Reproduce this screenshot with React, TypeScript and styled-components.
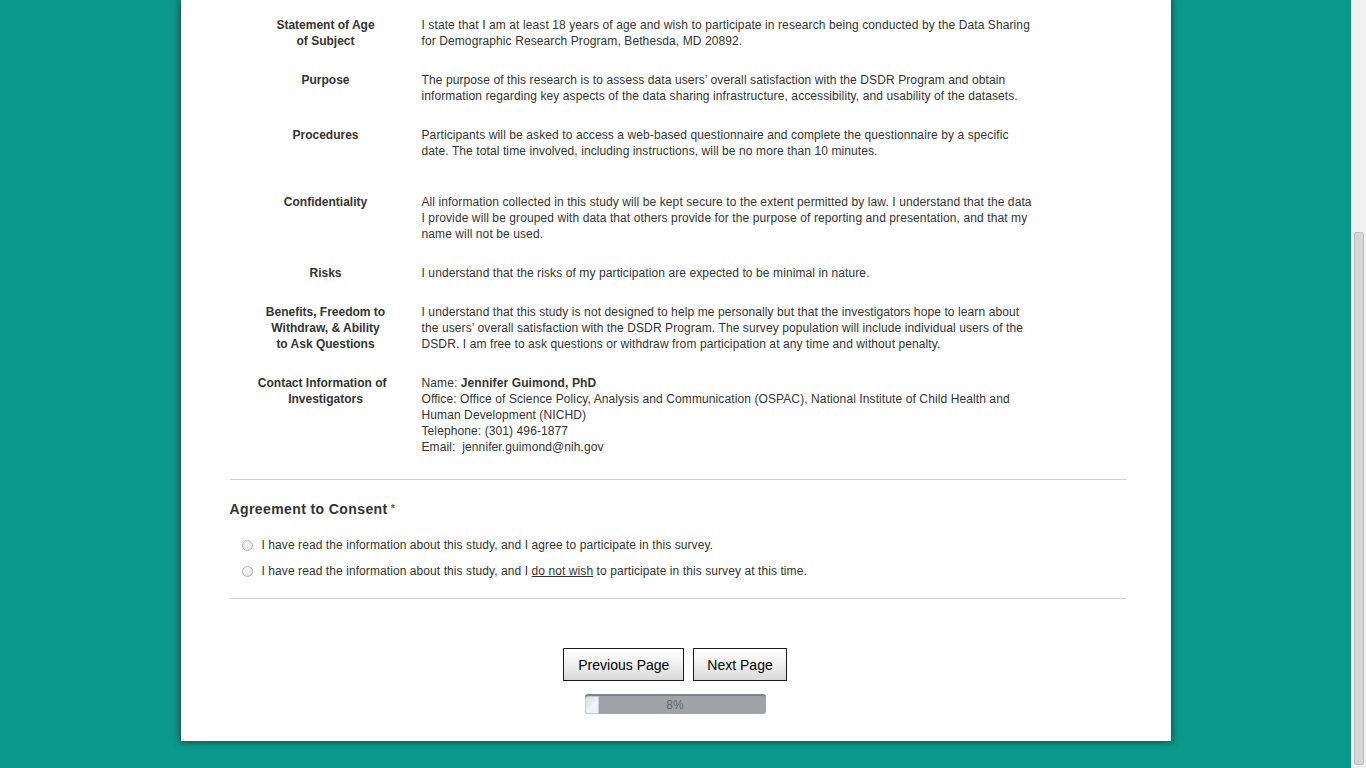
import * as React from 'react';
import styled, { createGlobalStyle } from 'styled-components';

const GlobalStyle = createGlobalStyle`
  html, body {
    margin: 0;
    padding: 0;
    overflow: hidden;
  }
  body {
    font-family: "Liberation Sans", Arial, sans-serif;
    color: #333;
  }
`;

const Screen = styled.div`
  display: flex;
  height: 768px;
  width: 1366px;
  overflow: hidden;
`;

const Backdrop = styled.div`
  flex: 1;
  background: #0a998c;
  display: flex;
  justify-content: center;
  align-items: flex-start;
`;

const Card = styled.div`
  width: 990px;
  box-sizing: border-box;
  background: #fff;
  padding: 17px 45px 27px 49px;
  box-shadow: 0 0 7px 1px rgba(40, 40, 40, 0.75);
`;

const InfoGrid = styled.div`
  display: grid;
  grid-template-columns: 192px 640px;
  row-gap: 23px;
  font-size: 12px;
  line-height: 16px;
`;

const Label = styled.div`
  font-weight: bold;
  text-align: center;
  color: #333;
`;

const Body = styled.div<{ $extra?: number }>`
  color: #333;
  letter-spacing: 0.1px;
  white-space: nowrap;
  padding-bottom: ${(p) => p.$extra || 0}px;
`;

const Rule = styled.div`
  border-top: 1px solid #cfcfcf;
`;

const FirstRule = styled(Rule)`
  margin-top: 24px;
`;

const Question = styled.div`
  font-size: 14px;
  font-weight: bold;
  line-height: 17px;
  letter-spacing: 0.4px;
  color: #333;
  margin: 20px 0 19px;
`;

const Required = styled.span`
  color: #d9363e;
  font-size: 11px;
  margin-left: 3px;
  vertical-align: 2px;
`;

const Options = styled.div`
  display: flex;
  flex-direction: column;
  gap: 10px;
  padding-left: 12px;
  margin-bottom: 19px;
`;

const Option = styled.label`
  display: flex;
  align-items: center;
  gap: 9px;
  font-size: 12px;
  line-height: 16px;
  letter-spacing: 0.08px;
  color: #333;
`;

const RadioDot = styled.span`
  width: 9px;
  height: 9px;
  border-radius: 50%;
  border: 1px solid #b4b4b4;
  background: radial-gradient(circle at 40% 35%, #fbfbfb, #dcdcdc);
  flex-shrink: 0;
`;

const Underlined = styled.span`
  text-decoration: underline;
`;

const Footer = styled.div`
  display: flex;
  flex-direction: column;
  align-items: center;
  margin: 49px 5px 0 0;
  gap: 13px;
`;

const ButtonRow = styled.div`
  display: flex;
  gap: 9px;
`;

const NavButton = styled.button<{ $pad?: number }>`
  font-family: "Liberation Sans", Arial, sans-serif;
  font-size: 14px;
  height: 33px;
  padding: 0 ${(p) => p.$pad ?? 14}px;
  color: #000;
  border: 1px solid #1a1a1a;
  border-radius: 0;
  background: linear-gradient(to bottom, #ffffff 0%, #f2f2f2 45%, #d8d8d8 100%);
  cursor: pointer;
`;

const Progress = styled.div`
  position: relative;
  width: 181px;
  height: 20px;
  border-radius: 3px;
  background: #a0a4a9;
  border-top: 2px solid #7f8389;
  box-sizing: border-box;
  overflow: hidden;
  display: flex;
  align-items: center;
  justify-content: center;
`;

const ProgressFill = styled.div`
  position: absolute;
  left: 0;
  top: 0;
  bottom: 0;
  border-radius: 3px 0 0 3px;
  background: linear-gradient(135deg, #d9dbe2 0%, #eceef7 48%, #f3f4fd 52%, #eef0fa 100%);
  border: 1px solid #c9ccd4;
  box-sizing: border-box;
`;

const ProgressText = styled.span`
  position: relative;
  font-size: 12px;
  color: #666;
  margin-top: -1px;
`;

const ScrollTrack = styled.div`
  width: 15px;
  background: #f1f1f1;
  border-left: 1px solid #e4e4e4;
  box-sizing: border-box;
  display: flex;
  flex-direction: column;
  padding: 232px 2px 3px 2px;
`;

const ScrollThumb = styled.div`
  flex: 1;
  background: #d6d6d6;
  border: 1px solid #bdbdbd;
  border-radius: 2px;
`;

const lines = (parts: React.ReactNode[]) =>
  parts.map((part, i) => (
    <React.Fragment key={i}>
      {i > 0 && <br />}
      {part}
    </React.Fragment>
  ));

const rows: { label: React.ReactNode; body: React.ReactNode; extra?: number }[] = [
  {
    label: lines(['Statement of Age', 'of Subject']),
    body: lines([
      'I state that I am at least 18 years of age and wish to participate in research being conducted by the Data Sharing',
      'for Demographic Research Program, Bethesda, MD 20892.',
    ]),
  },
  {
    label: 'Purpose',
    body: lines([
      'The purpose of this research is to assess data users\u2019 overall satisfaction with the DSDR Program and obtain',
      'information regarding key aspects of the data sharing infrastructure, accessibility, and usability of the datasets.',
    ]),
  },
  {
    label: 'Procedures',
    body: lines([
      'Participants will be asked to access a web-based questionnaire and complete the questionnaire by a specific',
      'date. The total time involved, including instructions, will be no more than 10 minutes.',
    ]),
    extra: 12,
  },
  {
    label: 'Confidentiality',
    body: lines([
      'All information collected in this study will be kept secure to the extent permitted by law. I understand that the data',
      'I provide will be grouped with data that others provide for the purpose of reporting and presentation, and that my',
      'name will not be used.',
    ]),
  },
  {
    label: 'Risks',
    body: 'I understand that the risks of my participation are expected to be minimal in nature.',
  },
  {
    label: lines(['Benefits, Freedom to', 'Withdraw, & Ability', 'to Ask Questions']),
    body: lines([
      'I understand that this study is not designed to help me personally but that the investigators hope to learn about',
      'the users\u2019 overall satisfaction with the DSDR Program. The survey population will include individual users of the',
      'DSDR. I am free to ask questions or withdraw from participation at any time and without penalty.',
    ]),
  },
  {
    label: lines(['Contact Information of\u00a0\u00a0', 'Investigators']),
    body: lines([
      <>
        Name: <b>Jennifer Guimond, PhD</b>
      </>,
      'Office: Office of Science Policy, Analysis and Communication (OSPAC), National Institute of Child Health and',
      'Human Development (NICHD)',
      'Telephone: (301) 496-1877',
      'Email:\u00a0 jennifer.guimond@nih.gov',
    ]),
  },
];

const progress = 8;

export default function App() {
  return (
    <>
      <GlobalStyle />
      <Screen>
        <Backdrop>
          <Card>
            <InfoGrid>
              {rows.map((row, i) => (
                <React.Fragment key={i}>
                  <Label>{row.label}</Label>
                  <Body $extra={row.extra}>{row.body}</Body>
                </React.Fragment>
              ))}
            </InfoGrid>
            <FirstRule />
            <Question>
              Agreement to Consent<Required>*</Required>
            </Question>
            <Options>
              <Option>
                <RadioDot />
                I have read the information about this study, and I agree to participate in this survey.
              </Option>
              <Option>
                <RadioDot />
                <span>
                  I have read the information about this study, and I <Underlined>do not wish</Underlined> to participate in this survey at this time.
                </span>
              </Option>
            </Options>
            <Rule />
            <Footer>
              <ButtonRow>
                <NavButton>Previous Page</NavButton>
                <NavButton $pad={13}>Next Page</NavButton>
              </ButtonRow>
              <Progress>
                <ProgressFill style={{ width: `${progress}%` }} />
                <ProgressText>{progress}%</ProgressText>
              </Progress>
            </Footer>
          </Card>
        </Backdrop>
        <ScrollTrack>
          <ScrollThumb />
        </ScrollTrack>
      </Screen>
    </>
  );
}
